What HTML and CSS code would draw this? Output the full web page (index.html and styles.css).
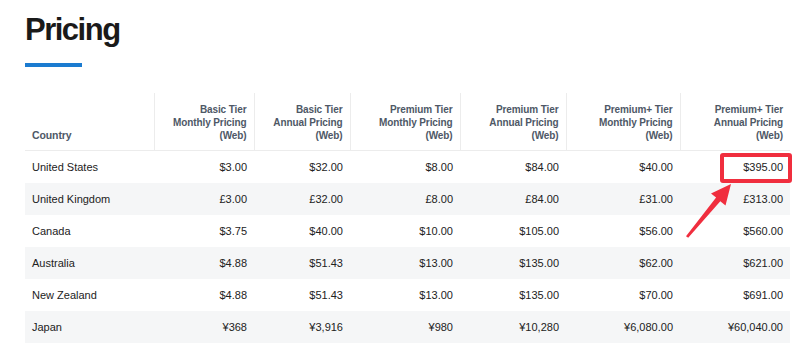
FILE: index.html
```html
<!DOCTYPE html>
<html>
<head>
<meta charset="utf-8">
<link rel="stylesheet" href="styles.css">
</head>
<body>
<div class="page">
  <h1 class="title">Pricing</h1>
  <div class="rule"></div>
  <table class="pricing">
    <thead>
      <tr>
        <th class="c-country">Country</th>
        <th class="c1">Basic Tier<br>Monthly Pricing<br>(Web)</th>
        <th class="c2">Basic Tier<br>Annual Pricing<br>(Web)</th>
        <th class="c3">Premium Tier<br>Monthly Pricing<br>(Web)</th>
        <th class="c4">Premium Tier<br>Annual Pricing<br>(Web)</th>
        <th class="c5">Premium+ Tier<br>Monthly Pricing<br>(Web)</th>
        <th class="c6">Premium+ Tier<br>Annual Pricing<br>(Web)</th>
      </tr>
    </thead>
    <tbody>
      <tr><td>United States</td><td>$3.00</td><td>$32.00</td><td>$8.00</td><td>$84.00</td><td>$40.00</td><td>$395.00</td></tr>
      <tr><td>United Kingdom</td><td>£3.00</td><td>£32.00</td><td>£8.00</td><td>£84.00</td><td>£31.00</td><td>£313.00</td></tr>
      <tr><td>Canada</td><td>$3.75</td><td>$40.00</td><td>$10.00</td><td>$105.00</td><td>$56.00</td><td>$560.00</td></tr>
      <tr><td>Australia</td><td>$4.88</td><td>$51.43</td><td>$13.00</td><td>$135.00</td><td>$62.00</td><td>$621.00</td></tr>
      <tr><td>New Zealand</td><td>$4.88</td><td>$51.43</td><td>$13.00</td><td>$135.00</td><td>$70.00</td><td>$691.00</td></tr>
      <tr><td>Japan</td><td>¥368</td><td>¥3,916</td><td>¥980</td><td>¥10,280</td><td>¥6,080.00</td><td>¥60,040.00</td></tr>
    </tbody>
  </table>
  <div class="highlight-box"></div>
  <svg class="arrow" width="800" height="346" viewBox="0 0 800 346">
    <polygon fill="#f02e3e" points="731,184 725.5,205.5 720.3,201.2 688.2,237.8 686,236.2 716.1,197.6 711,193.4"/>
  </svg>
</div>
</body>
</html>
```

FILE: styles.css
```css
html, body {
  margin: 0;
  padding: 0;
  background: #ffffff;
}

.page {
  position: relative;
  width: 800px;
  height: 346px;
  padding: 0 25px;
  box-sizing: border-box;
  font-family: "Liberation Sans", Arial, sans-serif;
  overflow: hidden;
}

.title {
  margin: 12px 0 0 0;
  font-size: 31px;
  line-height: 36px;
  font-weight: 700;
  letter-spacing: -1.5px;
  color: #1a1a1a;
}

.rule {
  width: 57px;
  height: 4px;
  margin-top: 15px;
  background: #1b7bd0;
}

.pricing {
  margin-top: 26px;
  width: 765px;
  table-layout: fixed;
  border-collapse: collapse;
  border-spacing: 0;
}

.pricing th {
  font-size: 10px;
  line-height: 13px;
  font-weight: 700;
  color: #4e5866;
  letter-spacing: -0.1px;
  text-align: right;
  vertical-align: bottom;
  padding: 10px 7px 8px 7px;
  border-left: 1px solid #ececec;
  border-bottom: 1px solid #ececec;
}

.pricing th.c-country {
  text-align: left;
  border-left: none;
  font-size: 10.5px;
}

.c-country { width: 129px; }
.c1 { width: 100px; }
.c2 { width: 96px; }
.c3 { width: 110px; }
.c4 { width: 106px; }
.c5 { width: 114px; }
.c6 { width: 110px; }

.pricing th, .pricing td {
  box-sizing: border-box;
}

.pricing td {
  height: 32px;
  padding: 0 7px;
  font-size: 11px;
  color: #222222;
  text-align: right;
  vertical-align: middle;
  white-space: nowrap;
}

.pricing td:first-child {
  text-align: left;
}

.pricing tbody tr:nth-child(even) td {
  background: #f5f6f7;
}

.highlight-box {
  position: absolute;
  left: 720px;
  top: 153px;
  width: 72px;
  height: 30px;
  box-sizing: border-box;
  border: 4px solid #f02e3e;
  border-radius: 3px;
}

.arrow {
  position: absolute;
  left: 0;
  top: 0;
  pointer-events: none;
}
```
